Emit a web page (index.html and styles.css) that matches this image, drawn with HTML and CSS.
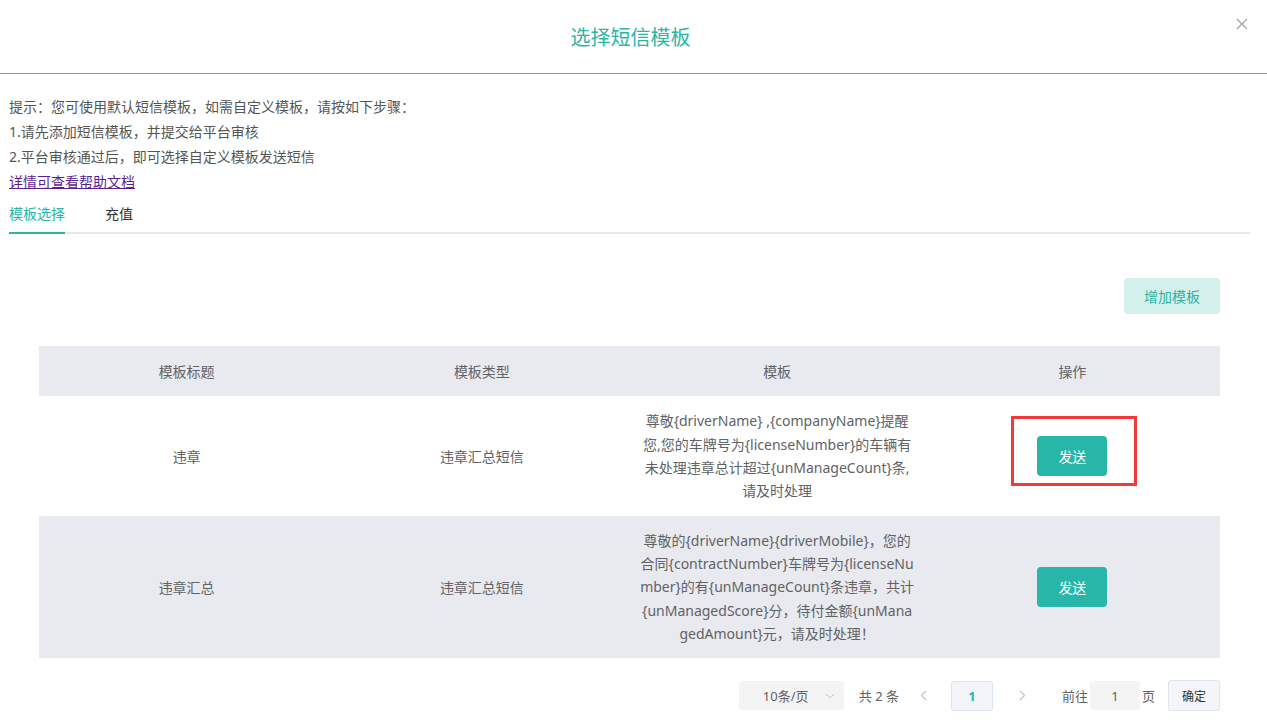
FILE: index.html
```html
<!DOCTYPE html>
<html lang="zh-CN">
<head>
    <meta charset="UTF-8">
    <title>选择短信模板</title>
    <link rel="stylesheet" href="styles.css">
</head>
<body>
    <div class="dialog">
        <div class="dialog-header">
            <span class="dialog-title">选择短信模板</span>
            <span class="dialog-close">
                <svg width="12" height="12" viewBox="0 0 12 12"><path d="M1 1L11 11M11 1L1 11" stroke="#a0a4ab" stroke-width="1.2" fill="none"/></svg>
            </span>
        </div>

        <div class="dialog-body">
            <div class="tips">
                <p>提示：您可使用默认短信模板，如需自定义模板，请按如下步骤：</p>
                <p>1.请先添加短信模板，并提交给平台审核</p>
                <p>2.平台审核通过后，即可选择自定义模板发送短信</p>
                <p><a href="#" class="help-link">详情可查看帮助文档</a></p>
            </div>

            <div class="tabs">
                <div class="tab active">模板选择</div>
                <div class="tab">充值</div>
            </div>

            <div class="tab-content">
                <div class="toolbar">
                    <button class="add-button">增加模板</button>
                </div>

                <table class="tpl-table">
                    <thead>
                        <tr>
                            <th>模板标题</th>
                            <th>模板类型</th>
                            <th>模板</th>
                            <th>操作</th>
                        </tr>
                    </thead>
                    <tbody>
                        <tr>
                            <td>违章</td>
                            <td>违章汇总短信</td>
                            <td class="tpl-text">尊敬{driverName} ,{companyName}提醒您,您的车牌号为{licenseNumber}的车辆有未处理违章总计超过{unManageCount}条,请及时处理</td>
                            <td>
                                <span class="marked">
                                    <button class="send-button">发送</button>
                                    <span class="mark-box"></span>
                                </span>
                            </td>
                        </tr>
                        <tr class="striped">
                            <td>违章汇总</td>
                            <td>违章汇总短信</td>
                            <td class="tpl-text">尊敬的{driverName}{driverMobile}，您的合同{contractNumber}车牌号为{licenseNumber}的有{unManageCount}条违章，共计{unManagedScore}分，待付金额{unManagedAmount}元，请及时处理！</td>
                            <td><button class="send-button">发送</button></td>
                        </tr>
                    </tbody>
                </table>

                <div class="pagination">
                    <div class="page-size">
                        <span>10条/页</span>
                        <svg width="10" height="6" viewBox="0 0 10 6"><path d="M1 1L5 5L9 1" stroke="#c0c4cc" stroke-width="1" fill="none"/></svg>
                    </div>
                    <span class="total">共 2 条</span>
                    <span class="arrow prev">
                        <svg width="7" height="11" viewBox="0 0 7 11"><path d="M6 1L1.5 5.5L6 10" stroke="#c0c4cc" stroke-width="1.3" fill="none"/></svg>
                    </span>
                    <span class="pager-num">1</span>
                    <span class="arrow next">
                        <svg width="7" height="11" viewBox="0 0 7 11"><path d="M1 1L5.5 5.5L1 10" stroke="#c0c4cc" stroke-width="1.3" fill="none"/></svg>
                    </span>
                    <span class="jump">前往</span>
                    <span class="jump-input">1</span>
                    <span class="jump-unit">页</span>
                    <button class="confirm-button">确定</button>
                </div>
            </div>
        </div>
    </div>
</body>
</html>
```

FILE: styles.css
```css
body {
    margin: 0;
    background: #fff;
    font-family: "Noto Sans", "Noto Sans CJK SC", sans-serif;
    color: #606266;
    font-size: 14px;
}

.dialog {
    width: 1267px;
}

.dialog-header {
    position: relative;
    height: 73px;
    border-bottom: 1px solid #3eb6a9;
    display: flex;
    align-items: center;
    justify-content: center;
}

.dialog-title {
    font-size: 20px;
    color: #2cb4a6;
    margin-left: -6px;
}

.dialog-close {
    position: absolute;
    right: 19px;
    top: 18px;
    display: flex;
}

.dialog-body {
    padding: 20px 17px 0 9px;
}

.tips p {
    margin: 0;
    line-height: 25px;
    font-size: 14px;
    color: #555;
}

.help-link {
    color: #5b1f8e;
    text-decoration: underline;
}

.tabs {
    display: flex;
    height: 38px;
    border-bottom: 2px solid #e4e7ed;
}

.tab {
    line-height: 40px;
    padding: 0 20px;
    color: #303133;
    font-size: 14px;
    position: relative;
}

.tab:first-child {
    padding-left: 0;
}

.tab.active {
    color: #2cb4a6;
}

.tab.active::after {
    content: "";
    position: absolute;
    left: 0;
    right: 20px;
    bottom: -2px;
    height: 2px;
    background: #2cb4a6;
}

.tab-content {
    padding: 44px 30px 0 30px;
}

.toolbar {
    display: flex;
    justify-content: flex-end;
}

.add-button {
    width: 96px;
    height: 36px;
    border: 1px solid #d2efea;
    border-radius: 4px;
    background: #d4f0eb;
    color: #2cb4a6;
    font-family: inherit;
    font-size: 14px;
}

.tpl-table {
    width: 100%;
    margin-top: 32px;
    border-collapse: collapse;
    table-layout: fixed;
}

.tpl-table th {
    height: 50px;
    padding: 0;
    background: #e9eaef;
    font-weight: normal;
    color: #606266;
    font-size: 14px;
}

.tpl-table td {
    text-align: center;
    padding: 0;
    color: #606266;
    font-size: 14px;
}

.tpl-table tbody tr {
    height: 120px;
}

.tpl-table tbody tr.striped {
    height: 142px;
    background: #e9eaef;
}

.tpl-table td.tpl-text {
    padding: 0 10px;
    line-height: 23.3px;
    word-break: break-all;
}

.marked {
    position: relative;
    display: inline-block;
    line-height: 0;
}

.mark-box {
    position: absolute;
    left: -26px;
    top: -20px;
    width: 126px;
    height: 70px;
    box-sizing: border-box;
    border: 3px solid #f23a3a;
}

.send-button {
    width: 70px;
    height: 40px;
    border: none;
    border-radius: 4px;
    background: #27b6a7;
    color: #fff;
    font-family: inherit;
    font-size: 14px;
}

.pagination {
    display: flex;
    justify-content: flex-end;
    align-items: center;
    margin-top: 22px;
    font-size: 13px;
    color: #606266;
}

.page-size {
    width: 105px;
    height: 29px;
    background: #f4f4f5;
    border-radius: 3px;
    display: flex;
    align-items: center;
    box-sizing: border-box;
    padding: 0 9px 0 24px;
    justify-content: space-between;
}

.total {
    margin-left: 15px;
}

.arrow {
    display: flex;
    margin-left: 21px;
}

.pager-num {
    width: 40px;
    height: 28px;
    margin-left: 24px;
    border: 1px solid #dbe4f2;
    border-radius: 3px;
    background: #f4f5f8;
    color: #27b6a7;
    font-weight: bold;
    display: flex;
    align-items: center;
    justify-content: center;
}

.arrow.next {
    margin-left: 26px;
}

.jump {
    margin-left: 36px;
}

.jump-input {
    width: 50px;
    height: 29px;
    margin-left: 2px;
    background: #f4f4f5;
    border-radius: 3px;
    display: flex;
    align-items: center;
    justify-content: center;
}

.jump-unit {
    margin-left: 2px;
}

.confirm-button {
    width: 52px;
    height: 31px;
    margin-left: 13px;
    border: 1px solid #dfe4ef;
    border-radius: 3px;
    background: #f4f5f8;
    color: #303133;
    font-family: inherit;
    font-size: 12px;
}
```
